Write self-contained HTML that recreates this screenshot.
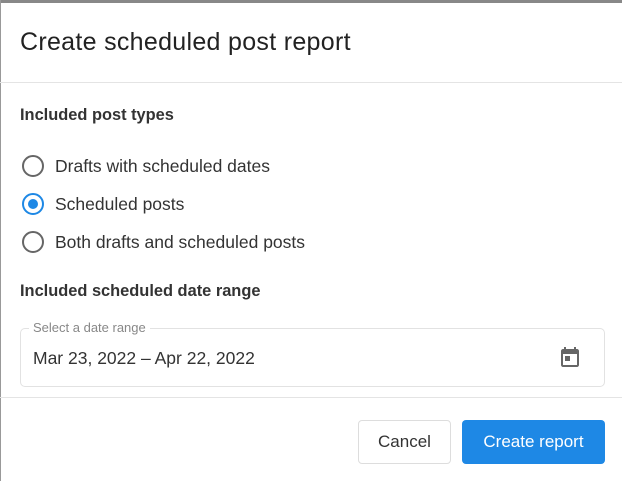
<!DOCTYPE html>
<html><head><style>
body{margin:0;width:622px;height:481px;background:#fff;font-family:"Liberation Sans",sans-serif;position:relative;overflow:hidden;color:#222}
.a{position:absolute;white-space:nowrap}
.r{position:absolute;left:22px;border:2px solid #666;border-radius:50%;box-sizing:border-box;width:22px;height:22px}
</style></head><body>
<div class="a" style="left:0;top:0;width:622px;height:3px;background:#888"></div>
<div class="a" style="left:0;top:0;width:1px;height:481px;background:#999"></div>
<div class="a" style="left:20px;top:28px;font-size:25px;color:#222;letter-spacing:0.3px">Create scheduled post report</div>
<div class="a" style="left:0;top:82px;width:622px;height:1px;background:#e4e4e4"></div>
<div class="a" style="left:20px;top:106px;font-size:16.4px;font-weight:bold;color:#333">Included post types</div>
<div class="r" style="top:155px"></div>
<div class="r" style="top:193px;border-color:#1e88e5"><div style="position:absolute;left:4px;top:4px;width:10px;height:10px;border-radius:50%;background:#1e88e5"></div></div>
<div class="r" style="top:231px"></div>
<div class="a" style="left:55px;top:156px;font-size:17.5px;color:#333">Drafts with scheduled dates</div>
<div class="a" style="left:55px;top:194px;font-size:17.5px;color:#333">Scheduled posts</div>
<div class="a" style="left:55px;top:232px;font-size:17.5px;color:#333">Both drafts and scheduled posts</div>
<div class="a" style="left:20px;top:282px;font-size:16.4px;font-weight:bold;color:#333">Included scheduled date range</div>
<div class="a" style="left:20px;top:328px;width:585px;height:59px;border:1px solid #e2e2e2;border-radius:5px;box-sizing:border-box"></div>
<div class="a" style="left:29px;top:320px;padding:0 4px;background:#fff;font-size:13px;color:#888">Select a date range</div>
<div class="a" style="left:33px;top:348px;font-size:17.5px;color:#333">Mar 23, 2022 – Apr 22, 2022</div>
<svg class="a" style="left:558px;top:345px" width="24" height="24" viewBox="0 0 24 24"><path fill="#666" d="M19 4h-1V2h-2v2H8V2H6v2H5c-1.1 0-2 .9-2 2v14c0 1.1.9 2 2 2h14c1.1 0 2-.9 2-2V6c0-1.1-.9-2-2-2zm0 16H5V9h14v11zM7 11h5v5H7z"/></svg>
<div class="a" style="left:0;top:397px;width:622px;height:1px;background:#e4e4e4"></div>
<div class="a" style="left:358px;top:420px;width:93px;height:44px;border:1px solid #ddd;border-radius:4px;box-sizing:border-box;text-align:center;line-height:42px;font-size:17px;color:#333">Cancel</div>
<div class="a" style="left:462px;top:420px;width:143px;height:44px;background:#1e88e5;border-radius:4px;text-align:center;line-height:44px;font-size:17px;color:#fff">Create report</div>
</body></html>
